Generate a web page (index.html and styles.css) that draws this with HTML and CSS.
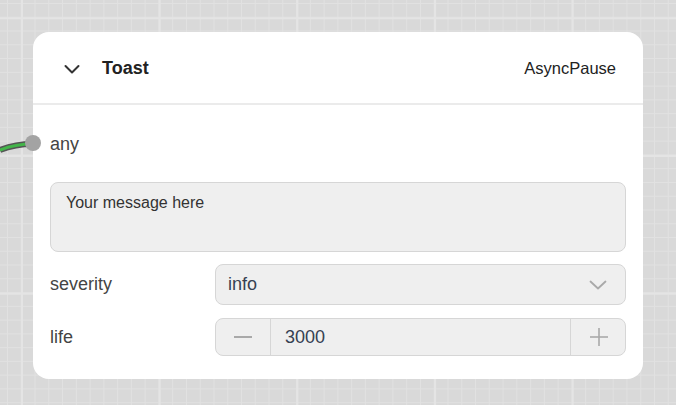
FILE: index.html
```html
<!DOCTYPE html>
<html>
<head>
<meta charset="utf-8">
<link rel="stylesheet" href="styles.css">
</head>
<body>
<div class="canvas">
  <svg class="wire" width="40" height="20" viewBox="0 0 40 20">
    <path d="M0 16 C 10 12, 20 10, 33 10" fill="none" stroke="#555" stroke-width="6"/>
    <path d="M0 16 C 10 12, 20 10, 33 10" fill="none" stroke="#43b54a" stroke-width="3"/>
  </svg>
  <div class="node">
    <div class="node-header">
      <svg class="collapse" width="16" height="10" viewBox="0 0 16 10"><polyline points="1.5,2 8,8.5 14.5,2" fill="none" stroke="#333" stroke-width="2" stroke-linecap="round" stroke-linejoin="round"/></svg>
      <span class="title">Toast</span>
      <span class="type">AsyncPause</span>
    </div>
    <div class="node-body">
      <div class="input-row">
        <span class="socket"></span>
        <span class="label">any</span>
      </div>
      <div class="textarea">Your message here</div>
      <div class="field">
        <span class="label field-label">severity</span>
        <div class="select">
          <span class="value">info</span>
          <svg width="18" height="10" viewBox="0 0 18 10"><polyline points="1.5,1.5 9,8.5 16.5,1.5" fill="none" stroke="#a9a9a9" stroke-width="1.8" stroke-linecap="round" stroke-linejoin="round"/></svg>
        </div>
      </div>
      <div class="field">
        <span class="label field-label">life</span>
        <div class="number">
          <div class="step"><svg width="20" height="20" viewBox="0 0 20 20"><line x1="1" y1="10" x2="19" y2="10" stroke="#a9a9a9" stroke-width="2"/></svg></div>
          <span class="value num-value">3000</span>
          <div class="step step-plus"><svg width="20" height="20" viewBox="0 0 20 20"><line x1="1" y1="10" x2="19" y2="10" stroke="#a9a9a9" stroke-width="1.6"/><line x1="10" y1="1" x2="10" y2="19" stroke="#a9a9a9" stroke-width="1.6"/></svg></div>
        </div>
      </div>
    </div>
  </div>
</div>
</body>
</html>
```

FILE: styles.css
```css
html, body {
  margin: 0;
  padding: 0;
}
body {
  width: 676px;
  height: 405px;
  overflow: hidden;
  font-family: "Liberation Sans", Arial, sans-serif;
  background-color: #d9d9d9;
  background-image:
    linear-gradient(to right, #e4e4e4 2px, transparent 2px),
    linear-gradient(to bottom, #e4e4e4 2px, transparent 2px),
    linear-gradient(to right, #e1e1e1 1px, transparent 1px),
    linear-gradient(to bottom, #e1e1e1 1px, transparent 1px);
  background-size: 137.7px 137.7px, 137.7px 137.7px, 13.77px 13.77px, 13.77px 13.77px;
  background-position: 21px 0, 0 155px, 7px 0, 0 3px;
}
.canvas {
  position: relative;
  padding: 32px 0 0 33px;
}
.wire {
  position: absolute;
  left: 0;
  top: 134px;
}
.node {
  position: relative;
  width: 610px;
  height: 347px;
  background: #fff;
  border-radius: 16px;
  box-sizing: border-box;
}
.node-header {
  height: 73px;
  border-bottom: 2px solid #ebebeb;
  display: flex;
  align-items: center;
  padding: 2px 27px 0 31px;
  box-sizing: border-box;
}
.collapse {
  margin-right: 22px;
}
.title {
  font-weight: bold;
  font-size: 18px;
  color: #222;
  flex: 1;
}
.type {
  font-size: 16.5px;
  color: #222;
}
.node-body {
  padding: 23px 17px 0 17px;
}
.input-row {
  position: relative;
  height: 30px;
  box-sizing: border-box;
  padding-top: 2px;
  display: flex;
  align-items: center;
}
.socket {
  position: absolute;
  left: -25px;
  top: 7px;
  width: 16px;
  height: 16px;
  border-radius: 50%;
  background: #a3a3a3;
}
.label {
  font-size: 18px;
  color: #444;
}
.textarea {
  margin-top: 24px;
  height: 70px;
  box-sizing: border-box;
  background: #efefef;
  border: 1px solid #d6d6d6;
  border-radius: 8px;
  padding: 11px 15px;
  font-size: 16px;
  color: #333;
}
.field {
  display: flex;
  align-items: center;
  margin-top: 12px;
}
.field + .field {
  margin-top: 13px;
}
.field-label {
  width: 165px;
  flex: none;
}
.select {
  flex: 1;
  height: 41px;
  box-sizing: border-box;
  background: #efefef;
  border: 1px solid #d6d6d6;
  border-radius: 8px;
  display: flex;
  align-items: center;
  justify-content: space-between;
  padding: 0 18px 0 12px;
}
.value {
  font-size: 18px;
  color: #364152;
}
.number {
  flex: 1;
  height: 38px;
  box-sizing: border-box;
  background: #efefef;
  border: 1px solid #d6d6d6;
  border-radius: 8px;
  display: flex;
  align-items: center;
}
.step {
  width: 54px;
  height: 100%;
  display: flex;
  align-items: center;
  justify-content: center;
  border-right: 1px solid #d6d6d6;
}
.step-plus {
  border-right: none;
  border-left: 1px solid #d6d6d6;
}
.step-plus svg {
  margin-left: 2px;
}
.num-value {
  flex: 1;
  padding-left: 14px;
}
```
